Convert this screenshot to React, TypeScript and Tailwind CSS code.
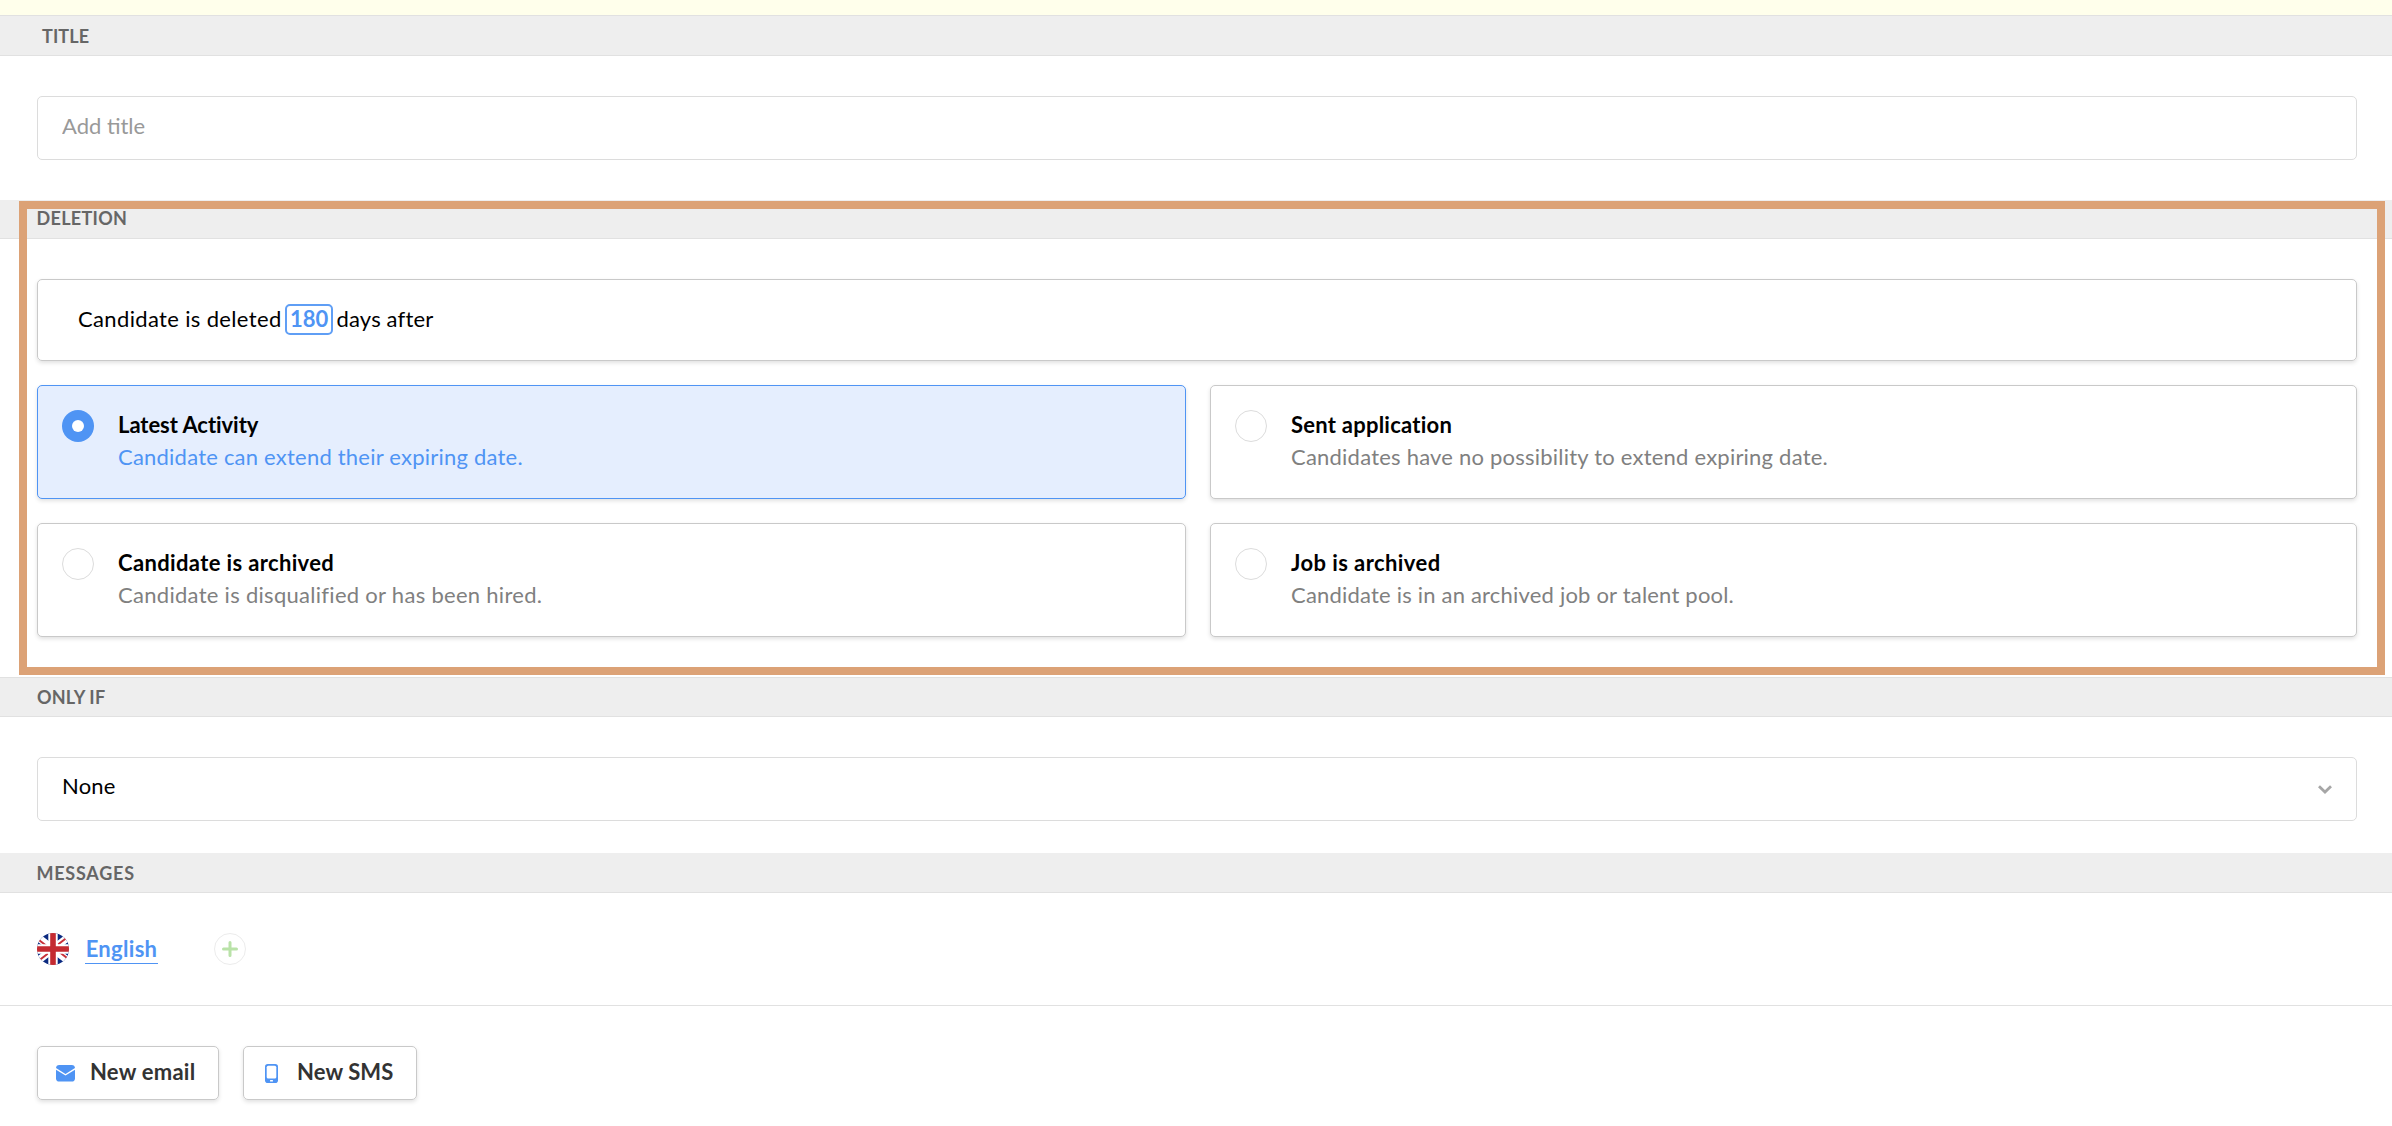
import { ReactNode, useState } from "react"

type HeadingProps = {
  children: ReactNode
  className?: string
}

function SectionHeading({ children, className = "" }: HeadingProps) {
  return (
    <h2
      className={`flex items-center border-b border-[#e1e1e1] bg-[#eeeeee] text-lg font-bold uppercase text-[#666666] ${className}`}
    >
      {children}
    </h2>
  )
}

type Option = {
  id: string
  title: string
  text: string
  titleClass: string
  textClass: string
}

const options: Option[] = [
  {
    id: "activity",
    title: "Latest Activity",
    text: "Candidate can extend their expiring date.",
    titleClass: "tracking-[-0.05px]",
    textClass: "tracking-[0.22px]",
  },
  {
    id: "application",
    title: "Sent application",
    text: "Candidates have no possibility to extend expiring date.",
    titleClass: "tracking-[0.24px]",
    textClass: "tracking-[0.22px]",
  },
  {
    id: "candidate",
    title: "Candidate is archived",
    text: "Candidate is disqualified or has been hired.",
    titleClass: "tracking-[0.36px]",
    textClass: "tracking-[0.29px]",
  },
  {
    id: "job",
    title: "Job is archived",
    text: "Candidate is in an archived job or talent pool.",
    titleClass: "tracking-[0.42px]",
    textClass: "tracking-[0.2px]",
  },
]

type OptionCardProps = {
  option: Option
  selected: boolean
  onSelect: () => void
}

function OptionCard({ option, selected, onSelect }: OptionCardProps) {
  return (
    <div
      onClick={onSelect}
      className={`flex h-[114px] cursor-pointer gap-6 rounded-[5px] border pt-6 pl-6 shadow-[0_2px_4px_rgba(0,0,0,0.12)] ${
        selected
          ? "border-[#4f94f4] bg-[#e5eefe]"
          : "border-[#c9c9c9] bg-white"
      }`}
    >
      <span
        className={`flex size-8 shrink-0 items-center justify-center rounded-full ${
          selected ? "bg-[#4f94f4]" : "border border-[#dcdcdc]"
        }`}
      >
        {selected && <span className="size-3 rounded-full bg-white"></span>}
      </span>
      <div className="-mt-px leading-8 whitespace-nowrap">
        <p className={`font-bold ${option.titleClass}`}>{option.title}</p>
        <p
          className={`${option.textClass} ${
            selected ? "text-[#4f94f4]" : "text-[#808080]"
          }`}
        >
          {option.text}
        </p>
      </div>
    </div>
  )
}

function UkFlag() {
  return (
    <svg viewBox="0 0 32 32" className="size-8">
      <clipPath id="flag">
        <circle cx="16" cy="16" r="16" />
      </clipPath>
      <g clipPath="url(#flag)">
        <path d="M0 0h32v32H0z" fill="#0b2a80" />
        <path d="M-2 2L34 30M34 2L-2 30" stroke="#fff" strokeWidth="7.4" />
        <path
          d="M0 5.6L11 14M21 11.5L34 1.4M-2 30.6L11 20.5M21 18L34 28"
          stroke="#c8313a"
          strokeWidth="2"
        />
        <path d="M16 0v32M0 16h32" stroke="#fff" strokeWidth="9.4" />
        <path d="M16 0v32M0 16h32" stroke="#c42b31" strokeWidth="5.6" />
      </g>
    </svg>
  )
}

function EmailIcon() {
  return (
    <svg viewBox="0 0 19 17" className="h-[17px] w-[19px]">
      <rect width="19" height="16.6" rx="3.4" fill="#4f94f4" />
      <path
        d="M-0.5 3.6L9.5 9.8L19.5 3.6"
        fill="none"
        stroke="#fff"
        strokeWidth="1.4"
      />
    </svg>
  )
}

function PhoneIcon() {
  return (
    <svg viewBox="0 0 13 19" className="h-[19px] w-[13px]">
      <rect width="13" height="19" rx="2.8" fill="#4f94f4" />
      <rect x="1.7" y="1.7" width="9.6" height="12.8" rx="1.6" fill="#fff" />
      <rect x="5" y="16" width="3" height="1.5" rx="0.6" fill="#fff" />
    </svg>
  )
}

function App() {
  const [selected, setSelected] = useState("activity")

  return (
    <main className="min-h-[1126px] bg-white font-[Lato,sans-serif] text-[22px] text-black">
      <div className="h-[15px] bg-[#ffffeb]"></div>

      <section>
        <SectionHeading className="h-[41px] border-t pl-[42px] tracking-[0.1px]">
          Title
        </SectionHeading>
        <div className="py-10 pr-[35px] pl-[37px]">
          <input
            placeholder="Add title"
            className="block h-16 w-full rounded-[5px] border border-[#dcdcdc] px-6 pb-1.5 placeholder:text-[#999999]"
          />
        </div>
      </section>

      <section className="relative">
        <SectionHeading className="h-[39px] pb-0.5 pl-[36.5px] tracking-[0.3px]">
          Deletion
        </SectionHeading>
        <div className="flex flex-col gap-6 py-10 pr-[35px] pl-[37px]">
          <div className="flex h-[82px] items-center rounded-[5px] border border-[#c9c9c9] pb-1 pl-10 shadow-[0_2px_4px_rgba(0,0,0,0.12)]">
            <span className="tracking-[0.35px]">Candidate is deleted</span>
            <span className="mt-[3px] ml-[3px] flex h-[31px] w-12 items-center justify-center rounded-[5px] border-2 border-[#5f9ef5] pb-[3px] pl-px font-bold text-[#4f94f4]">
              180
            </span>
            <span className="ml-1 tracking-[0.15px]">days after</span>
          </div>
          <div className="grid grid-cols-[1149fr_1147fr] gap-6">
            {options.map((option) => (
              <OptionCard
                key={option.id}
                option={option}
                selected={selected === option.id}
                onSelect={() => setSelected(option.id)}
              />
            ))}
          </div>
        </div>
        {/* highlight frame around the deletion settings */}
        <div className="pointer-events-none absolute top-px right-[7px] bottom-0.5 left-[19px] border-8 border-[#dca276]"></div>
      </section>

      <section>
        <SectionHeading className="h-10 border-t pl-[37px] tracking-[0.2px]">
          Only if
        </SectionHeading>
        <div className="pt-10 pr-[35px] pb-8 pl-[37px]">
          <div className="flex h-16 items-center justify-between rounded-[5px] border border-[#dcdcdc] px-6">
            <span className="pb-2 tracking-[0.2px]">None</span>
            <svg viewBox="0 0 14 9" className="h-[9px] w-3.5">
              <path
                d="M1 1.3L7 7L13 1.3"
                fill="none"
                stroke="#a6a6a6"
                strokeWidth="2.8"
              />
            </svg>
          </div>
        </div>
      </section>

      <section>
        <SectionHeading className="h-10 pl-[36.5px] tracking-[0.75px]">
          Messages
        </SectionHeading>
        <div className="flex items-center border-b border-[#e1e1e1] py-10 pl-[37px]">
          <UkFlag />
          <a className="ml-4 w-[73px] border-b border-[#4f94f4] text-center leading-[29px] font-bold tracking-[0.3px] text-[#4f94f4]">
            English
          </a>
          <button className="ml-14 flex size-8 items-center justify-center rounded-full border border-[#ececec]">
            <svg viewBox="0 0 16 16" className="size-4">
              <path
                d="M8 1.5v13M1.5 8h13"
                stroke="#b9e2a8"
                strokeWidth="3"
                strokeLinecap="round"
              />
            </svg>
          </button>
        </div>
        <div className="flex gap-6 pt-10 pl-[37px] font-bold text-[#333333]">
          <button className="flex h-[54px] w-[182px] items-center gap-[15px] rounded-[5px] border border-[#c9c9c9] pl-[18px] shadow-[0_2px_4px_rgba(0,0,0,0.12)]">
            <EmailIcon />
            <span className="pb-1 tracking-[0.25px]">New email</span>
          </button>
          <button className="flex h-[54px] w-[174px] items-center gap-[19px] rounded-[5px] border border-[#c9c9c9] pl-[21px] shadow-[0_2px_4px_rgba(0,0,0,0.12)]">
            <PhoneIcon />
            <span className="pb-1 tracking-[0.1px]">New SMS</span>
          </button>
        </div>
      </section>
    </main>
  )
}

export default App
